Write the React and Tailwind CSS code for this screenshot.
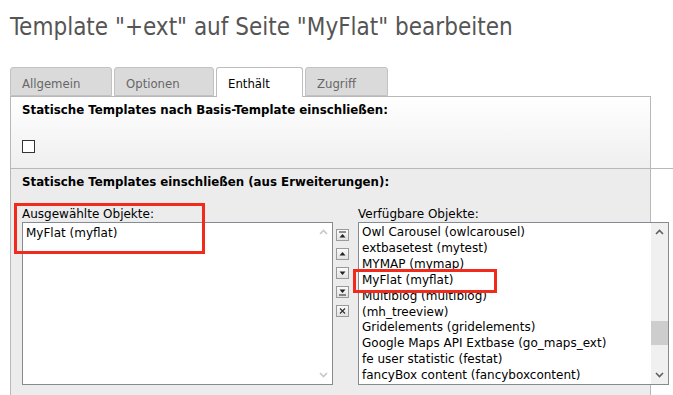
import React from "react";

const availableItems = [
  "Owl Carousel (owlcarousel)",
  "extbasetest (mytest)",
  "MYMAP (mymap)",
  "MyFlat (myflat)",
  "Multiblog (multiblog)",
  "(mh_treeview)",
  "Gridelements (gridelements)",
  "Google Maps API Extbase (go_maps_ext)",
  "fe user statistic (festat)",
  "fancyBox content (fancyboxcontent)",
];

const tabs = [
  { label: "Allgemein", width: "w-[102px]" },
  { label: "Optionen", width: "w-[100px]" },
  { label: "Enthält", width: "w-[87px]", active: true },
  { label: "Zugriff", width: "w-[83px]" },
];

const narrowFont = '"Liberation Sans Narrow", "DejaVu Sans Condensed", "Liberation Sans", sans-serif';

function MoveIcon({ type }) {
  return (
    <div className="w-[13px] h-[12px] border border-[#9a9a9a] bg-gradient-to-b from-[#fafafa] to-[#e2e2e2] flex items-center justify-center">
      <svg width="9" height="8" viewBox="0 0 9 8">
        {type === "top" && (
          <>
            <rect x="1" y="0.5" width="7" height="1" fill="#222" />
            <path d="M1.5 6.5 L4.5 3 L7.5 6.5 Z" fill="#222" />
          </>
        )}
        {type === "up" && <path d="M1.5 5.5 L4.5 2 L7.5 5.5 Z" fill="#222" />}
        {type === "down" && <path d="M1.5 2.5 L4.5 6 L7.5 2.5 Z" fill="#222" />}
        {type === "bottom" && (
          <>
            <path d="M1.5 1.5 L4.5 5 L7.5 1.5 Z" fill="#222" />
            <rect x="1" y="6.5" width="7" height="1" fill="#222" />
          </>
        )}
        {type === "remove" && (
          <path d="M2 1.5 L7 6.5 M7 1.5 L2 6.5" stroke="#333" strokeWidth="1.2" />
        )}
      </svg>
    </div>
  );
}

function Chevron({ up, color }) {
  return (
    <svg width="9" height="6" viewBox="0 0 9 6">
      <path
        d={up ? "M1 5 L4.5 1.5 L8 5" : "M1 1 L4.5 4.5 L8 1"}
        fill="none"
        stroke={color}
        strokeWidth="1.6"
      />
    </svg>
  );
}

function App() {
  return (
    <div
      className="w-[673px] h-[395px] overflow-hidden bg-white text-black"
      style={{ fontFamily: '"DejaVu Sans", Verdana, sans-serif' }}
    >
      <h1
        className="pl-[10px] pt-[9px] h-[67px] text-[24px] leading-[36px] text-[#555]"
        style={{ fontFamily: narrowFont, fontStretch: "condensed" }}
      >
        Template "+ext" auf Seite "MyFlat" bearbeiten
      </h1>

      <div className="pl-[10px] flex gap-[2px] h-[29px] items-end">
        {tabs.map((tab) => (
          <div
            key={tab.label}
            className={
              tab.active
                ? `${tab.width} h-[30px] -mb-px relative z-10 bg-white border border-b-0 border-[#bdbdbd] rounded-t-[3px] pl-[11px] pt-[6px] text-[13px] text-black`
                : `${tab.width} h-[29px] bg-[#dadada] border border-[#c2c2c2] rounded-t-[3px] pl-[11px] pt-[6px] text-[13px] text-[#666]`
            }
            style={{ fontFamily: narrowFont, fontStretch: "condensed" }}
          >
            {tab.label}
          </div>
        ))}
      </div>

      <div className="ml-[10px] w-[641px] border-x border-t border-[#b8b8b8]">
        <div className="h-[71px] bg-gradient-to-b from-white to-[#efefef] pl-[11px] pt-[5px]">
          <div className="text-[11.8px] font-bold leading-[16px]">
            Statische Templates nach Basis-Template einschließen:
          </div>
          <div className="mt-[22px] w-[13px] h-[13px] border border-[#333] bg-white" />
        </div>
        <div className="h-px bg-[#b8b8b8] w-[663px]" />

        <div className="relative bg-[#ececec] h-[230px] pl-[11px] pt-[5px]">
          <div className="text-[11.8px] font-bold leading-[16px]">
            Statische Templates einschließen (aus Erweiterungen):
          </div>

          <div className="flex mt-[17px]">
            <div className="w-[311px] shrink-0">
              <div className="text-[12px] leading-[14px] h-[14px] mb-[1px]">Ausgewählte Objekte:</div>
              <div className="h-[163px] border border-[#868a91] bg-white flex">
                <div className="flex-1 px-[3px] pt-[2px] text-[12px] leading-[16px]">MyFlat (myflat)</div>
                <div className="w-[17px] flex flex-col items-center justify-between py-[6px]">
                  <Chevron up color="#c8c8c8" />
                  <Chevron color="#c8c8c8" />
                </div>
              </div>
            </div>

            <div className="w-[25px] shrink-0 pl-[3px] pt-[22px] flex flex-col gap-[7px]">
              <MoveIcon type="top" />
              <MoveIcon type="up" />
              <MoveIcon type="down" />
              <MoveIcon type="bottom" />
              <MoveIcon type="remove" />
            </div>

            <div className="w-[311px] shrink-0">
              <div className="text-[12px] leading-[14px] h-[14px] mb-[1px]">Verfügbare Objekte:</div>
              <div className="h-[163px] border border-[#868a91] bg-white flex">
                <div className="flex-1 px-[3px] pt-[2px] text-[12px] leading-[15.9px] whitespace-nowrap overflow-hidden">
                  {availableItems.map((item) => (
                    <div key={item}>{item}</div>
                  ))}
                </div>
                <div className="w-[17px] bg-[#f0f0f0] flex flex-col items-center py-[6px]">
                  <Chevron up color="#606060" />
                  <div className="flex-1 w-full pt-[86px]">
                    <div className="w-full h-[24px] bg-[#cdcdcd]" />
                  </div>
                  <Chevron color="#606060" />
                </div>
              </div>
            </div>
          </div>

          <div className="absolute left-[3px] top-[34px] w-[191px] h-[51px] border-[3px] border-[#f22a1c]" />
          <div className="absolute left-[342px] top-[100px] w-[144px] h-[24px] border-[3px] border-[#f22a1c]" />
        </div>
      </div>
    </div>
  );
}

export default App;
